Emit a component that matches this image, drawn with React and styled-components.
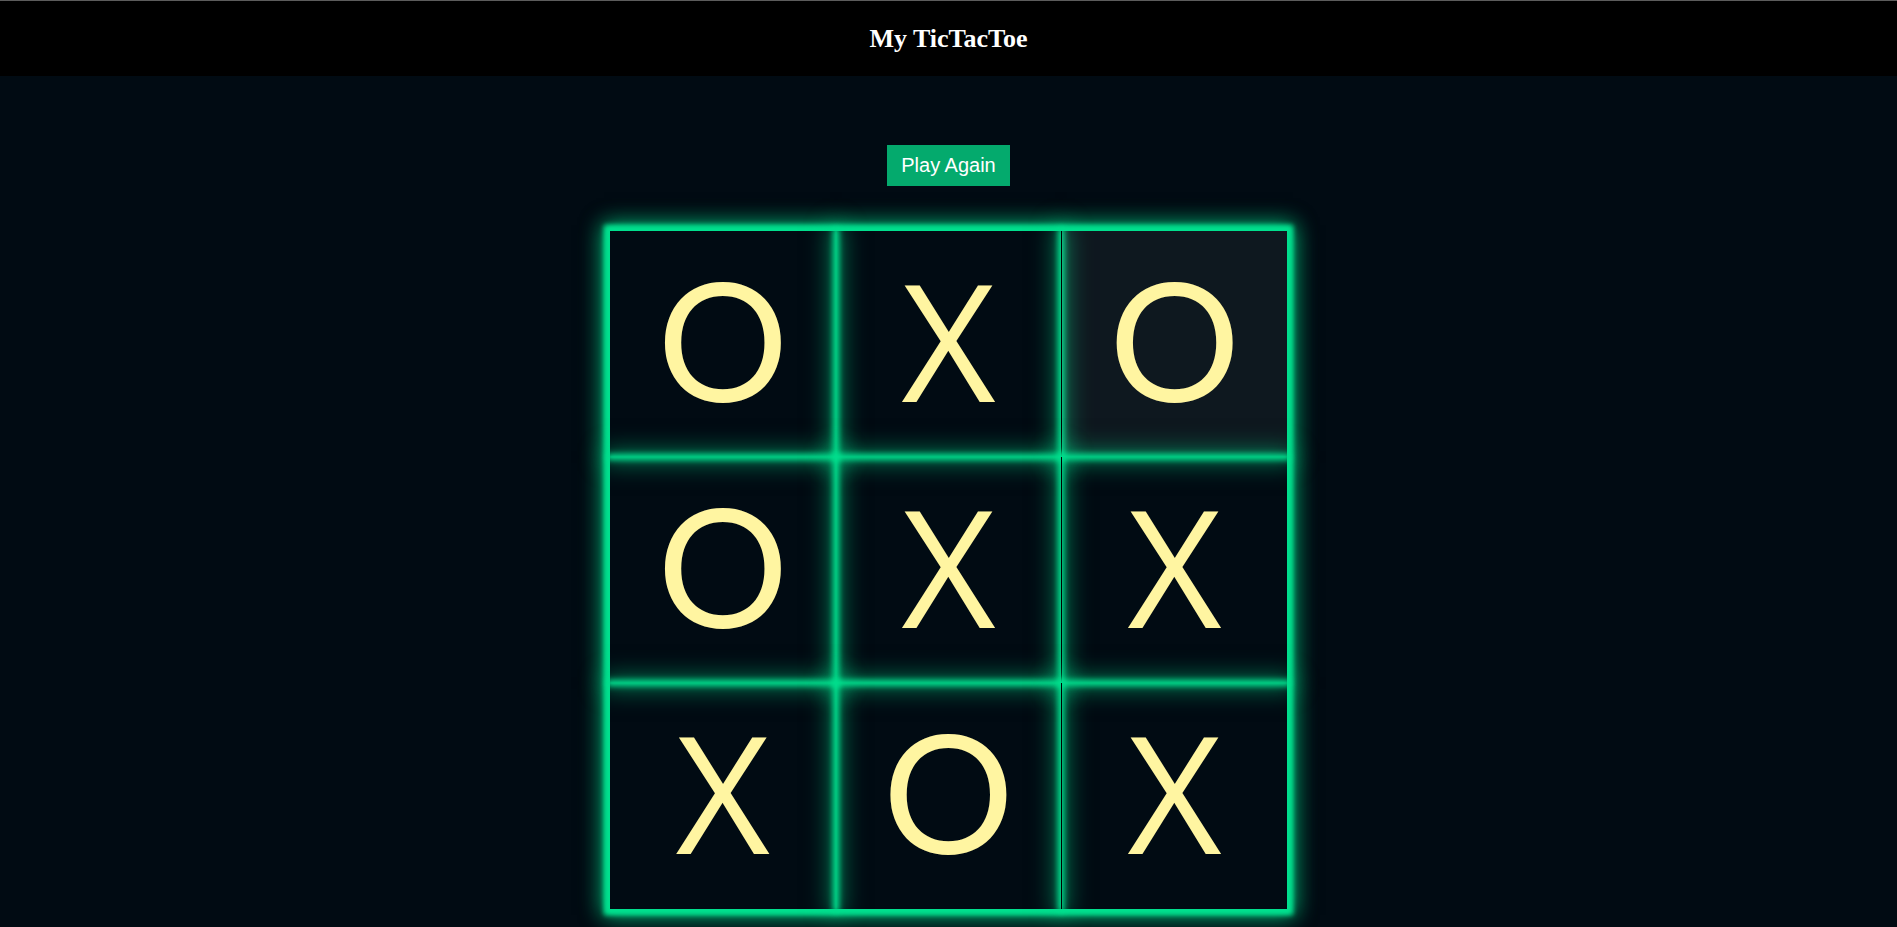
import React, { useState } from "react";
import styled, { createGlobalStyle } from "styled-components";

const GlobalStyle = createGlobalStyle`
  html, body {
    margin: 0;
    padding: 0;
    background: #010b13;
  }
  body {
    font-family: "Liberation Sans", Arial, sans-serif;
  }
`;

const Header = styled.header`
  height: 75px;
  border-top: 1px solid #5c5c5c;
  background: #000;
  display: flex;
  align-items: center;
  justify-content: center;
`;

const Title = styled.h1`
  margin: 0;
  font-family: "Liberation Serif", "Times New Roman", serif;
  font-weight: 700;
  font-size: 26px;
  color: #fff;
`;

const Main = styled.main`
  display: flex;
  flex-direction: column;
  align-items: center;
  padding-top: 69px;
  padding-bottom: 18px;
`;

const Button = styled.button`
  border: none;
  background: #04aa6d;
  color: #fff;
  font-family: "Liberation Sans", Arial, sans-serif;
  font-size: 20px;
  line-height: 23px;
  padding: 9px 14px;
  cursor: pointer;
`;

const Board = styled.div`
  margin-top: 45px;
  width: 677px;
  height: 678px;
  display: grid;
  grid-template-columns: repeat(3, 1fr);
  grid-template-rows: repeat(3, 1fr);
  box-shadow: 0 0 5px 6px #00e08e, 0 0 20px 8px rgba(0, 224, 142, 0.45);
`;

const Cell = styled.div`
  box-sizing: border-box;
  display: flex;
  align-items: center;
  justify-content: center;
  padding-bottom: 10px;
  background: ${(p) => (p.$hover ? "rgba(255,255,255,0.055)" : "transparent")};
  border-left: ${(p) => (p.$edge ? "1px solid #000" : "none")};
  box-shadow: 0 0 6px 3px #00e08e, 0 0 22px 6px rgba(0, 224, 142, 0.5);
  color: #fff5a1;
  font-family: ${(p) => (p.$mark === "X" ? '"Open Sans", "Noto Sans", sans-serif' : 'Lato, "Open Sans", sans-serif')};
  font-size: ${(p) => (p.$mark === "X" ? "163px" : "164px")};
  line-height: 1;
  cursor: pointer;
  user-select: none;
`;

const initial = ["O", "X", "O", "O", "X", "X", "X", "O", "X"];

export default function App() {
  const [cells, setCells] = useState(initial);
  return (
    <>
      <GlobalStyle />
      <Header>
        <Title>My TicTacToe</Title>
      </Header>
      <Main>
        <Button onClick={() => setCells(Array(9).fill(""))}>Play Again</Button>
        <Board>
          {cells.map((v, i) => (
            <Cell key={i} $mark={v} $hover={i === 2} $edge={i % 3 === 2}>
              {v}
            </Cell>
          ))}
        </Board>
      </Main>
    </>
  );
}
